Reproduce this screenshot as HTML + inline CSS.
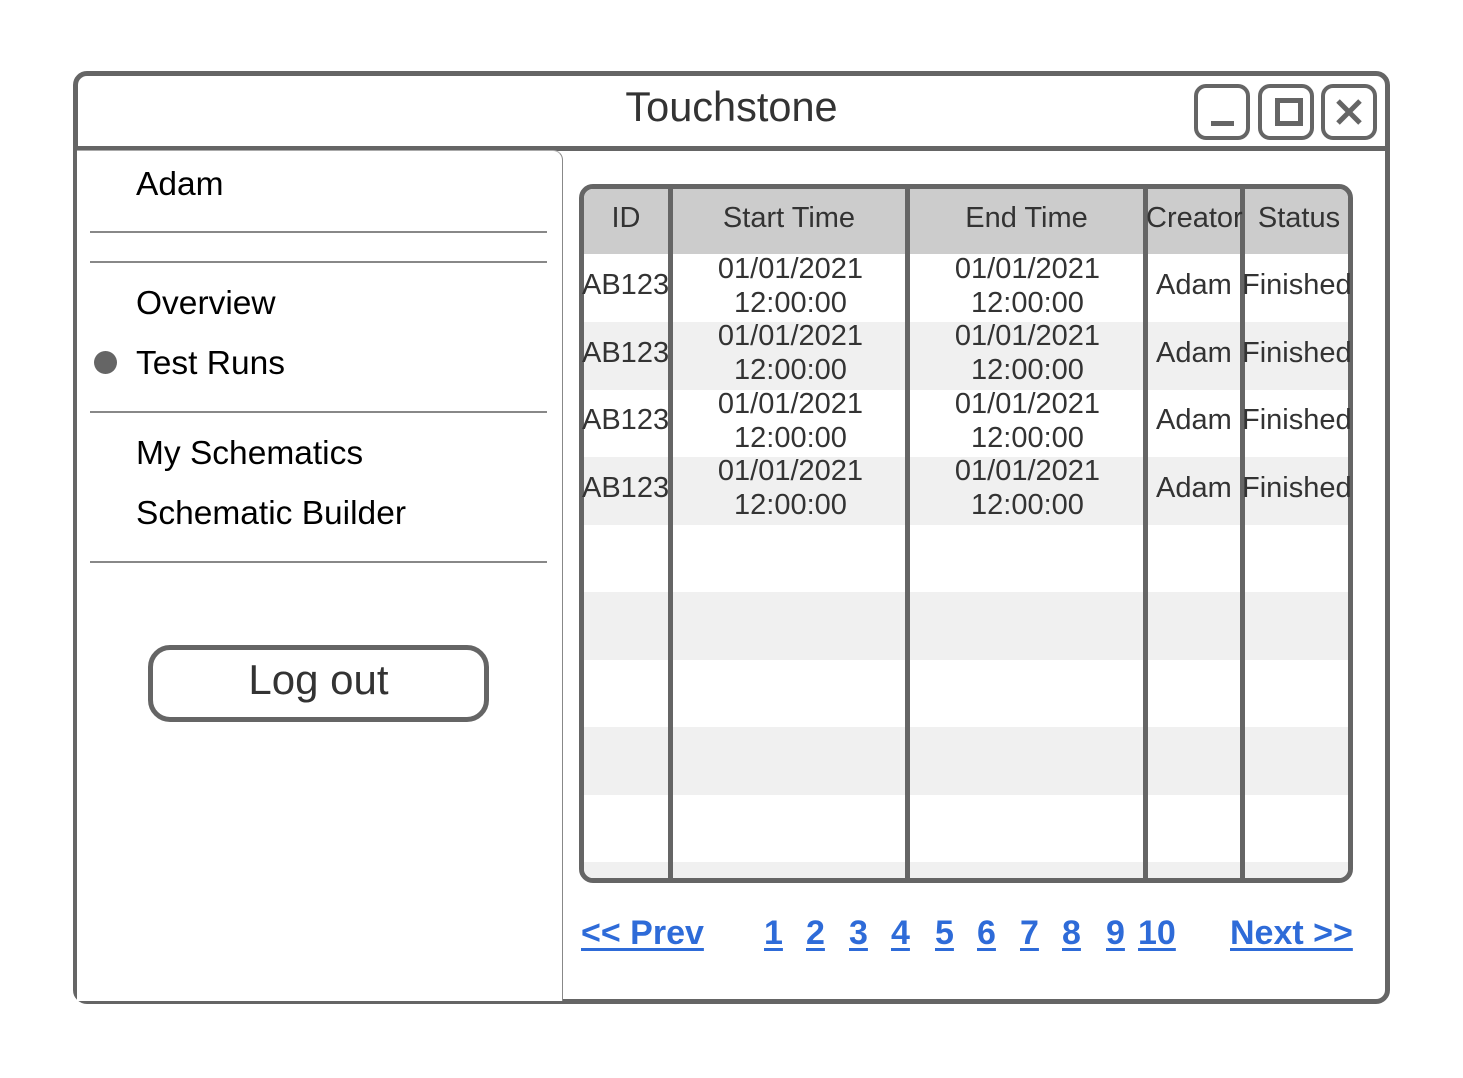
<!DOCTYPE html>
<html><head><meta charset="utf-8"><style>
*{margin:0;padding:0;box-sizing:border-box}
body{width:1463px;height:1078px;background:#fff;position:relative;overflow:hidden;font-family:"Liberation Sans",Arial,sans-serif}
.a{position:absolute}
.win{left:73px;top:71px;width:1317px;height:933px;border:5px solid #656565;border-radius:14px;background:#fff}
.tb{left:73px;top:71px;width:1317px;height:80px;border-bottom:5px solid #656565}
.title{left:0;width:1463px;top:83px;text-align:center;font-size:41.5px;color:#333}
.btn{width:56px;height:56px;border:4px solid #656565;border-radius:12px;top:84px;background:#fff}
.side{left:77px;top:150px;width:486px;height:851px;border-right:1.5px solid #888;border-top:1px solid #aaa;border-top-right-radius:10px;background:#fff}
.hl{left:90px;width:457px;height:2px;background:#888}
.nav{left:136px;font-size:33.5px;color:#000;line-height:40px}
.logout{left:148px;top:645px;width:341px;height:77px;border:5px solid #656565;border-radius:22px;text-align:center;font-size:42px;color:#333;line-height:60px}
.tbl{left:579px;top:184px;width:774px;height:699px;border:5px solid #656565;border-radius:14px;overflow:hidden;background:#fff}
.row{position:absolute;left:0;width:100%;height:68px}
.vl{position:absolute;top:0;width:5px;height:100%;background:#656565}
.c{position:absolute;text-align:center;font-size:29px;color:#333;line-height:34px;white-space:nowrap}
.pg{top:914px;font-size:34px;font-weight:bold;color:#2e6bd8;text-decoration:underline;text-decoration-thickness:3px;text-underline-offset:4px;font-family:"Liberation Sans Narrow","Liberation Sans",sans-serif;white-space:nowrap}
</style></head><body>
<div class="a win"></div>
<div class="a tb"></div>
<div class="a title">Touchstone</div>
<div class="a btn" style="left:1194px"><div class="a" style="left:13px;top:33px;width:23px;height:5px;background:#656565"></div></div>
<div class="a btn" style="left:1258px"><div class="a" style="left:13px;top:10px;width:28px;height:28px;border:5px solid #656565"></div></div>
<div class="a btn" style="left:1321px"><svg class="a" style="left:0;top:0" width="48" height="48"><path d="M13 13L35 35M35 13L13 35" stroke="#656565" stroke-width="5"/></svg></div>

<div class="a side"></div>
<div class="a nav" style="top:165px">Adam</div>
<div class="a hl" style="top:231px"></div>
<div class="a hl" style="top:261px"></div>
<div class="a nav" style="top:284px">Overview</div>
<div class="a" style="left:94px;top:351px;width:23px;height:23px;border-radius:50%;background:#656565"></div>
<div class="a nav" style="top:344px">Test Runs</div>
<div class="a hl" style="top:411px"></div>
<div class="a nav" style="top:434px">My Schematics</div>
<div class="a nav" style="top:494px">Schematic Builder</div>
<div class="a hl" style="top:561px"></div>
<div class="a logout">Log out</div>

<div class="a tbl">
<div class="row" style="top:0;height:65px;background:#ccc"></div>
<div class="row" style="top:133px;background:#f0f0f0"></div>
<div class="row" style="top:268px;background:#f0f0f0"></div>
<div class="row" style="top:403px;background:#f0f0f0"></div>
<div class="row" style="top:538px;background:#f0f0f0"></div>
<div class="row" style="top:673px;background:#f0f0f0"></div>
<div class="vl" style="left:84px"></div>
<div class="vl" style="left:321px"></div>
<div class="vl" style="left:559px"></div>
<div class="vl" style="left:656px"></div>
<div class="c" style="left:0;width:84px;top:12px">ID</div>
<div class="c" style="left:89px;width:232px;top:12px">Start Time</div>
<div class="c" style="left:326px;width:233px;top:12px">End Time</div>
<div class="c" style="left:562px;width:100px;top:12px;text-align:left">Creator</div>
<div class="c" style="left:661px;width:108px;top:12px">Status</div>
</div>

<div class="a c" style="left:582px;top:268px;text-align:left">AB123</div>
<div class="a c" style="left:673px;top:252px;width:235px">01/01/2021<br>12:00:00</div>
<div class="a c" style="left:910px;top:252px;width:235px">01/01/2021<br>12:00:00</div>
<div class="a c" style="left:1156px;top:268px;">Adam</div>
<div class="a c" style="left:1242px;top:268px;">Finished</div>

<div class="a c" style="left:582px;top:336px;text-align:left">AB123</div>
<div class="a c" style="left:673px;top:319px;width:235px">01/01/2021<br>12:00:00</div>
<div class="a c" style="left:910px;top:319px;width:235px">01/01/2021<br>12:00:00</div>
<div class="a c" style="left:1156px;top:336px;">Adam</div>
<div class="a c" style="left:1242px;top:336px;">Finished</div>

<div class="a c" style="left:582px;top:403px;text-align:left">AB123</div>
<div class="a c" style="left:673px;top:387px;width:235px">01/01/2021<br>12:00:00</div>
<div class="a c" style="left:910px;top:387px;width:235px">01/01/2021<br>12:00:00</div>
<div class="a c" style="left:1156px;top:403px;">Adam</div>
<div class="a c" style="left:1242px;top:403px;">Finished</div>

<div class="a c" style="left:582px;top:471px;text-align:left">AB123</div>
<div class="a c" style="left:673px;top:454px;width:235px">01/01/2021<br>12:00:00</div>
<div class="a c" style="left:910px;top:454px;width:235px">01/01/2021<br>12:00:00</div>
<div class="a c" style="left:1156px;top:471px;">Adam</div>
<div class="a c" style="left:1242px;top:471px;">Finished</div>

<div class="a pg" style="left:581px">&lt;&lt; Prev</div>
<div class="a pg" style="left:764px">1</div>
<div class="a pg" style="left:806px">2</div>
<div class="a pg" style="left:849px">3</div>
<div class="a pg" style="left:891px">4</div>
<div class="a pg" style="left:935px">5</div>
<div class="a pg" style="left:977px">6</div>
<div class="a pg" style="left:1020px">7</div>
<div class="a pg" style="left:1062px">8</div>
<div class="a pg" style="left:1106px">9</div>
<div class="a pg" style="left:1138px">10</div>
<div class="a pg" style="left:1230px">Next &gt;&gt;</div>
</body></html>
